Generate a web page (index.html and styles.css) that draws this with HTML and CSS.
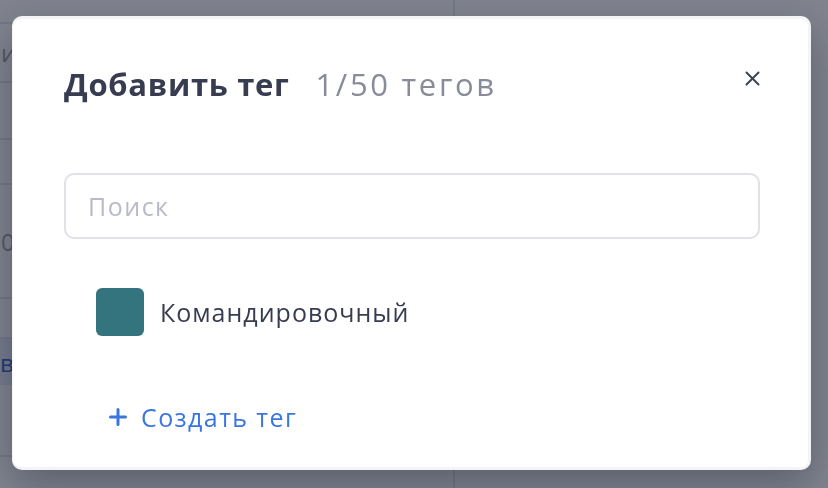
FILE: index.html
```html
<!DOCTYPE html>
<html lang="ru">
<head>
<meta charset="UTF-8">
<title>Добавить тег</title>
<link rel="stylesheet" href="styles.css">
</head>
<body>
<div class="page">
<div class="list">
<div class="row row-top"></div>
<div class="row row-a"><span class="cell-text">и</span></div>
<div class="row row-b"></div>
<div class="row row-c"></div>
<div class="row row-d"><span class="cell-text">0_</span></div>
<div class="row row-e"></div>
<div class="row row-f"><span class="cell-link">ви</span></div>
<div class="row row-g"></div>
</div>
<div class="side"></div>
</div>

<div class="overlay">
<div class="modal">
<div class="modal-head">
<h2 class="modal-title">Добавить тег <span class="counter">1/50 тегов</span></h2>
<button class="close" type="button" aria-label="Закрыть">
<svg width="15" height="15" viewBox="0 0 15 15"><path d="M1.5 1.5L13.5 13.5M13.5 1.5L1.5 13.5" stroke="#3d4257" stroke-width="2" stroke-linecap="round"/></svg>
</button>
</div>
<input class="search" type="text" placeholder="Поиск">
<ul class="tags">
<li class="tag"><span class="swatch"></span>Командировочный</li>
</ul>
<button class="create" type="button">
<svg width="18" height="18" viewBox="0 0 18 18"><path d="M9 1.5V16.5M1.5 9H16.5" stroke="#3a76e0" stroke-width="3" stroke-linecap="round"/></svg>
Создать тег
</button>
</div>
</div>
</body>
</html>
```
FILE: styles.css
```css
body {
margin: 0;
font-family: "Open Sans", "Liberation Sans", sans-serif;
background-color: #ffffff;
overflow: hidden;
}

.page {
display: flex;
height: 488px;
}

.list {
width: 453px;
border-right: 2px solid #e3e5ea;
}

.row {
border-bottom: 2px solid #e3e5ea;
box-sizing: border-box;
display: flex;
align-items: center;
font-size: 24px;
color: #9a9eaa;
}

.row-top { height: 24px; }
.row-a { height: 59px; }
.row-b { height: 57px; }
.row-c { height: 45px; }
.row-d { height: 114px; }
.row-e { height: 40px; }
.row-f { height: 46px; background-color: #e6edfa; border-bottom: none; }
.row-g { height: 72px; }

.cell-text {
margin-left: 1px;
}

.cell-link {
margin-left: 0;
color: #2f5fc4;
}

.overlay {
position: fixed;
inset: 0;
background-color: rgba(22, 28, 48, 0.54);
}

.modal {
position: absolute;
left: 12px;
top: 16px;
width: 799px;
height: 454px;
box-sizing: border-box;
padding: 43px 48px 0 51px;
background-color: #ffffff;
border: 3px solid #f4f4f6;
border-left-width: 1px;
border-radius: 10px;
box-shadow: 0 14px 40px rgba(20, 24, 40, 0.35);
}

.modal-head {
display: flex;
justify-content: space-between;
align-items: center;
height: 44px;
}

.modal-title {
margin: 0;
font-size: 31px;
font-weight: 700;
letter-spacing: 0.7px;
color: #383c50;
white-space: nowrap;
}

.counter {
margin-left: 17px;
font-weight: 400;
letter-spacing: 2.7px;
color: #888b99;
}

.close {
align-self: flex-start;
margin-top: 9px;
border: none;
background: none;
padding: 0;
width: 15px;
height: 15px;
}

.search {
display: block;
margin-top: 67px;
width: 100%;
height: 66px;
box-sizing: border-box;
padding: 0 22px;
border: 2px solid #e1e1e8;
border-radius: 10px;
font-family: inherit;
font-size: 25px;
letter-spacing: 1.5px;
color: #383c50;
outline: none;
}

.search::placeholder {
color: #b9bac7;
}

.tags {
list-style: none;
margin: 49px 0 0;
padding: 0 0 0 32px;
}

.tag {
display: flex;
align-items: center;
gap: 16px;
font-size: 25px;
letter-spacing: 1px;
color: #383c50;
}

.swatch {
width: 48px;
height: 48px;
border-radius: 6px;
background-color: #33747f;
}

.create {
display: flex;
align-items: center;
gap: 14px;
margin-top: 64px;
margin-left: 45px;
border: none;
background: none;
padding: 0;
font-family: inherit;
font-size: 25px;
letter-spacing: 1.4px;
color: #3a76e0;
}
```
